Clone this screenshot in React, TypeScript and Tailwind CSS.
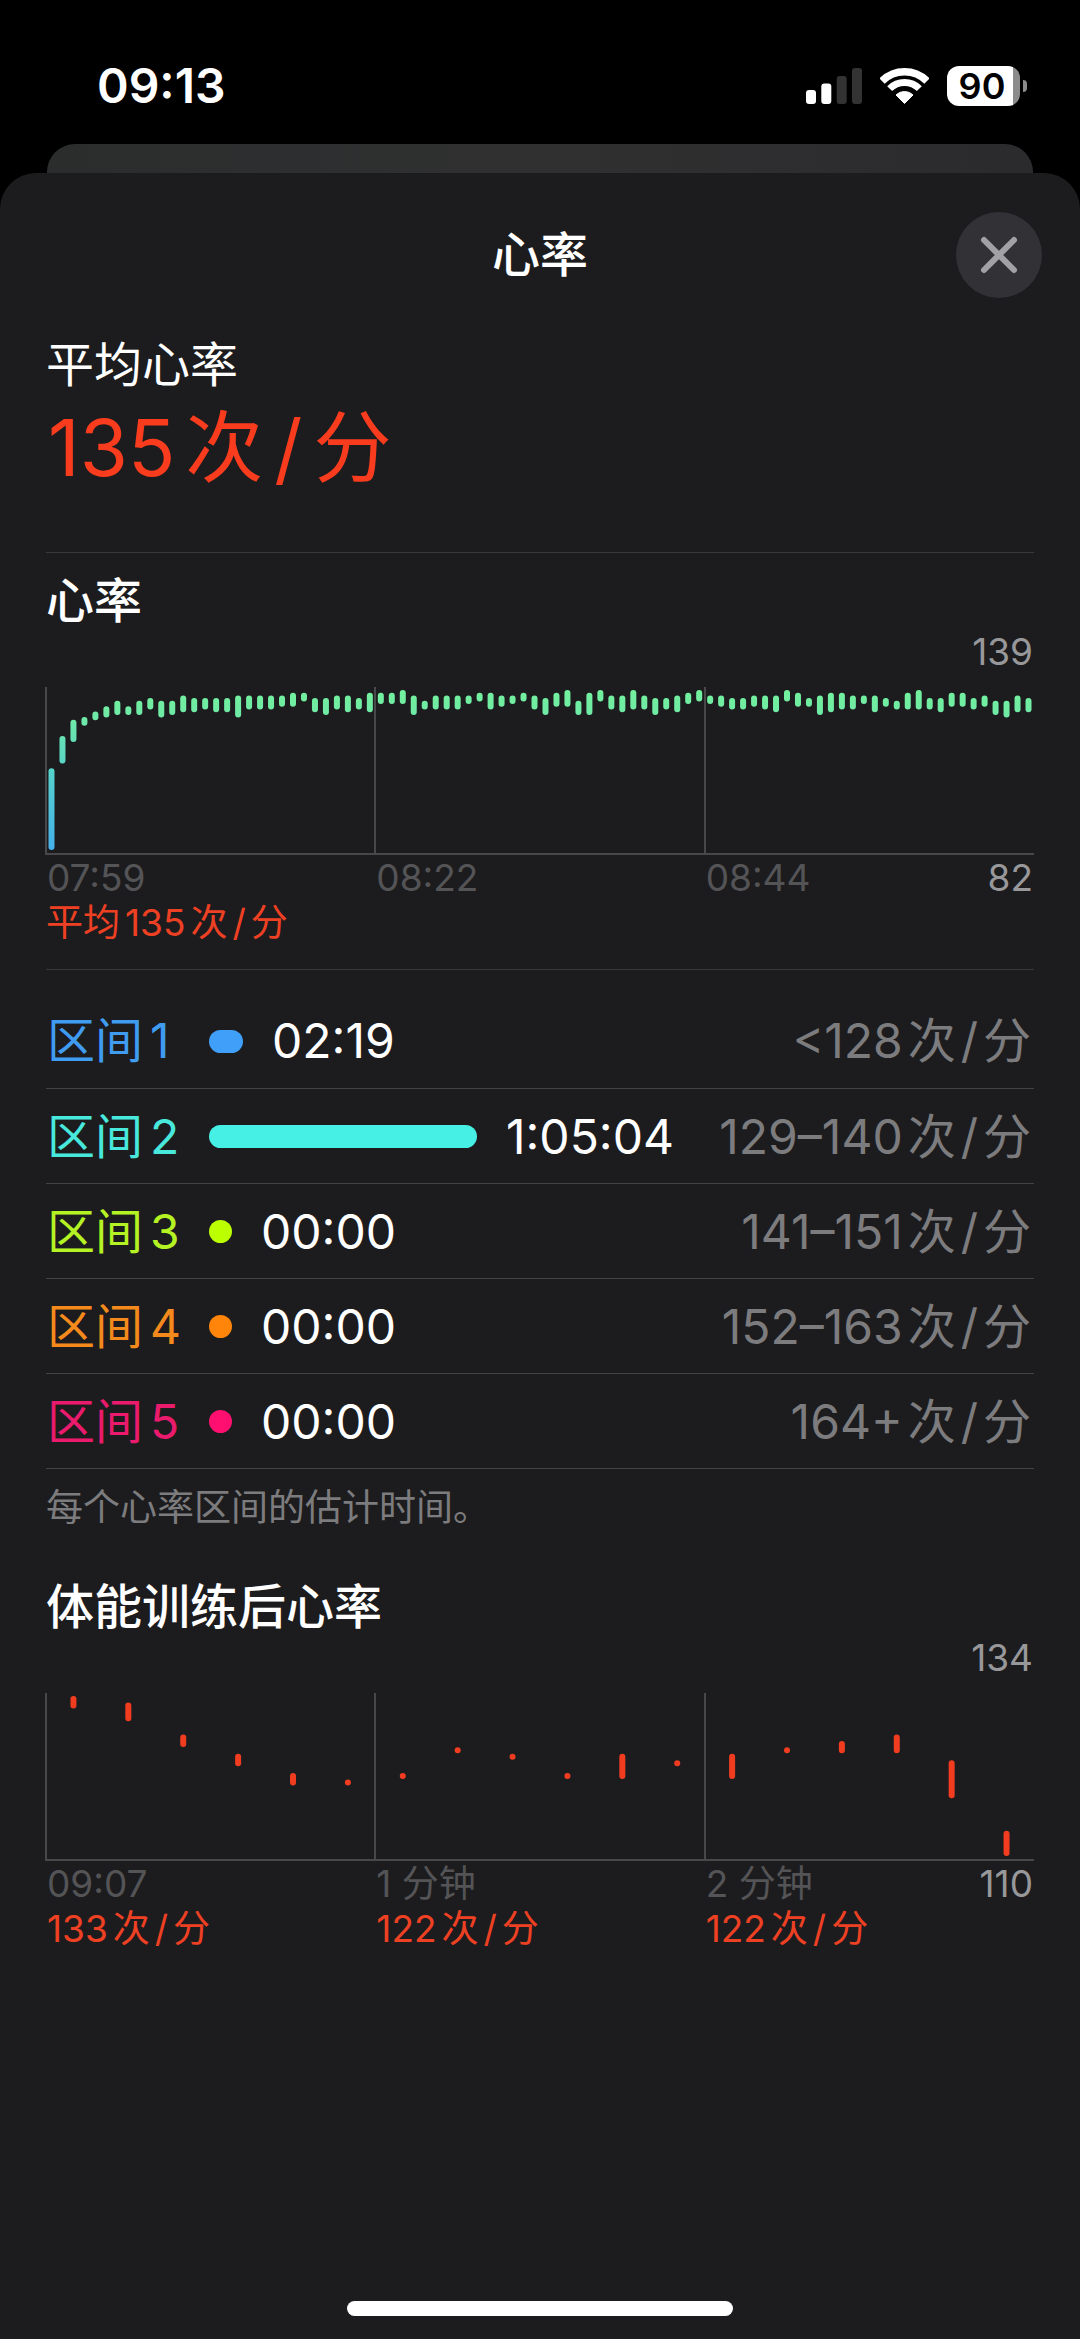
type Range = [number, number];

// [min, max] beats per minute for every sample
const workoutSamples: Range[] = [
  [82, 110], [114, 122], [122, 128], [128, 129], [130, 131], [131, 133], [132, 135], [132, 133], [132, 135], [134, 136],
  [131, 135], [132, 135], [133, 137], [133, 136], [134, 136], [133, 136], [133, 136], [131, 137], [134, 137], [134, 137],
  [134, 137], [135, 137], [135, 138], [137, 138], [133, 136], [132, 136], [134, 137], [133, 137], [134, 136], [133, 138],
  [136, 138], [136, 138], [136, 139], [132, 137], [134, 135], [134, 137], [134, 137], [134, 137], [136, 137], [137, 138],
  [134, 138], [135, 137], [136, 137], [137, 138], [134, 137], [132, 136], [135, 138], [135, 139], [132, 135], [132, 138],
  [137, 139], [134, 137], [133, 137], [134, 139], [134, 137], [132, 136], [134, 136], [133, 137], [136, 138], [137, 139],
  [136, 137], [135, 137], [134, 136], [134, 136], [135, 137], [134, 137], [133, 137], [137, 139], [135, 138], [135, 136],
  [132, 137], [133, 138], [134, 138], [134, 137], [136, 137], [133, 137], [135, 136], [134, 135], [134, 138], [134, 139],
  [134, 136], [133, 136], [135, 138], [135, 138], [134, 136], [135, 137], [132, 135], [131, 135], [133, 137], [133, 136],
];

const recoverySamples: Range[] = [
  [133, 134], [131, 133], [127, 128], [124, 125], [121, 122], [121, 121],
  [122, 122], [126, 126], [125, 125], [122, 122], [122, 125], [124, 124],
  [122, 125], [126, 126], [126, 127], [126, 128], [119, 124], [110, 113],
];

const zones = [
  { id: 1, text: "text-[#409cf0]", bar: "bg-[#409ff8]", width: 34, time: "02:19", range: "<128" },
  { id: 2, text: "text-[#48e8dc]", bar: "bg-[#46f0e4]", width: 268, time: "1:05:04", range: "129–140" },
  { id: 3, text: "text-[#b4f224]", bar: "bg-[#bbff00]", width: 23, time: "00:00", range: "141–151" },
  { id: 4, text: "text-[#f58a1c]", bar: "bg-[#ff850a]", width: 23, time: "00:00", range: "152–163" },
  { id: 5, text: "text-[#ea1a6c]", bar: "bg-[#ff0f70]", width: 23, time: "00:00", range: "164+" },
];

const CHART_WIDTH = 988;
const CHART_HEIGHT = 168;
const BAR_WIDTH = 6;

function Bpm({ value, large = false }: { value: string; large?: boolean }) {
  return (
    <span className="whitespace-nowrap">
      {value}
      <span className={large ? "ml-[10px]" : "ml-[5px]"}>次</span>
      <span className={large ? "mx-[11px]" : "mx-[5px]"}>/</span>
      <span>分</span>
    </span>
  );
}

function StatusBar() {
  return (
    <div className="flex h-[144px] items-center justify-between pt-[28px] pr-[53px] pl-[97px]">
      <span className="text-[48px] leading-[56px] font-semibold">09:13</span>
      <div className="flex items-center gap-[18px]">
        <svg className="h-[36px] w-[56px]" viewBox="0 0 56 36" aria-hidden="true">
          <rect x="0" y="22" width="10" height="14" rx="3" fill="#fff" />
          <rect x="15.3" y="15.5" width="10" height="20.5" rx="3" fill="#fff" />
          <rect x="30.7" y="8" width="10" height="28" rx="3" fill="#333" />
          <rect x="46" y="0" width="10" height="36" rx="3" fill="#333" />
        </svg>
        <svg className="h-[36px] w-[49px]" viewBox="0 0 49 36" fill="none" aria-hidden="true">
          <path d="M2.05 13.05A31.75 31.75 0 0 1 46.95 13.05" stroke="#fff" strokeWidth="7.5" />
          <path d="M9.65 20.65A21 21 0 0 1 39.35 20.65" stroke="#fff" strokeWidth="7" />
          <path d="M24.5 35.5L16 27A12 12 0 0 1 33 27Z" fill="#fff" stroke="#fff" strokeWidth="1" strokeLinejoin="round" />
        </svg>
        <div className="flex items-center gap-[3px]">
          <div className="flex h-[40px] w-[73px] items-center justify-center rounded-[12px] bg-linear-to-r from-white from-90% to-[#8c8c8c] to-90% pr-[3px] text-[36px] leading-[40px] font-semibold text-black">
            90
          </div>
          <div className="h-[12px] w-[4px] rounded-r-full bg-[#8c8c8c]" />
        </div>
      </div>
    </div>
  );
}

interface ChartProps {
  id: string;
  label: string;
  samples: Range[];
  min: number;
  max: number;
  stops: [number, string][];
}

function RangeChart({ id, label, samples, min, max, stops }: ChartProps) {
  const step = CHART_WIDTH / samples.length;
  const unit = (CHART_HEIGHT - 8 - BAR_WIDTH) / (max - min);

  return (
    <svg
      className="mt-[13px] block w-full overflow-visible"
      viewBox={`0 0 ${CHART_WIDTH} ${CHART_HEIGHT}`}
      role="img"
      aria-label={label}
    >
      <defs>
        <linearGradient id={id} gradientUnits="userSpaceOnUse" x1="0" y1="0" x2="0" y2={CHART_HEIGHT}>
          {stops.map(([offset, color]) => (
            <stop key={offset} offset={offset} stopColor={color} />
          ))}
        </linearGradient>
      </defs>
      <g fill="#48484a">
        <rect x="-1" y="0" width="2" height={CHART_HEIGHT} />
        <rect x="328" y="0" width="2" height={CHART_HEIGHT} />
        <rect x="658" y="0" width="2" height={CHART_HEIGHT} />
        <rect x="-1" y={CHART_HEIGHT - 2} width={CHART_WIDTH + 1} height="2" />
      </g>
      <g fill={`url(#${id})`}>
        {samples.map(([low, high], i) => (
          <rect
            key={i}
            x={(i + 0.5) * step - BAR_WIDTH / 2}
            y={3 + (max - high) * unit}
            width={BAR_WIDTH}
            height={(high - low) * unit + BAR_WIDTH}
            rx={BAR_WIDTH / 2}
          />
        ))}
      </g>
    </svg>
  );
}

function AxisLabels({ labels, min }: { labels: string[]; min: number }) {
  return (
    <div className="grid grid-cols-3 text-[#545457]">
      {labels.map((label, i) => (
        <div key={label} className="flex justify-between px-px">
          <span>{label}</span>
          {i === labels.length - 1 && <span className="text-[#98989b]">{min}</span>}
        </div>
      ))}
    </div>
  );
}

export default function App() {
  return (
    <div className="flex min-h-screen flex-col bg-black font-['Inter','Noto_Sans_CJK_SC',sans-serif] text-white" lang="zh-CN">
      <StatusBar />
      <div className="mx-[47px] h-[29px] rounded-t-[28px] bg-linear-to-r from-[#2b2d2d] via-[#303031] to-[#2b2b2d]" />

      <main className="flex flex-1 flex-col rounded-t-[36px] bg-[#1c1c1e] pt-[39px]">
        <header className="grid grid-cols-[1fr_auto_1fr] items-center px-[38px]">
          <h1 className="col-start-2 text-[48px] leading-[56px] font-medium">心率</h1>
          <button
            type="button"
            aria-label="关闭"
            className="flex size-[86px] items-center justify-center justify-self-end rounded-full bg-[#323236]"
          >
            <svg className="size-[38px]" viewBox="0 0 38 38" fill="none" stroke="#a1a1a6" strokeWidth="6" strokeLinecap="round">
              <path d="M4 4L34 34M34 4L4 34" />
            </svg>
          </button>
        </header>

        <div className="px-[46px] text-[37px] leading-[45px]">
          <section className="mt-[39px] border-b border-[#38383a] pb-[58px]">
            <h2 className="text-[48px] leading-[56px]">平均心率</h2>
            <p className="mt-[9px] pl-[2px] text-[78px] leading-[92px] text-[#fa3c1e]">
              <Bpm value="135" large />
            </p>
          </section>

          {/* Heart rate during the workout */}
          <section className="border-b border-[#38383a] pt-[20px] pb-[24px]">
            <h2 className="text-[48px] leading-[56px] font-medium">心率</h2>
            <p className="pr-px text-right text-[#98989b]">139</p>
            <RangeChart
              id="workout"
              label="体能训练心率"
              samples={workoutSamples}
              min={82}
              max={139}
              stops={[
                [0, "#74f29c"],
                [0.2, "#6ee8a8"],
                [0.5, "#55d2cc"],
                [1, "#44aeec"],
              ]}
            />
            <AxisLabels labels={["07:59", "08:22", "08:44"]} min={82} />
            <p className="text-[#ee4023]">
              平均<span className="ml-[5px]"><Bpm value="135" /></span>
            </p>
          </section>

          {/* Zones */}
          <table className="mt-[23px] w-full border-collapse text-[48px] leading-[56px]">
            <tbody>
              {zones.map((zone) => (
                <tr key={zone.id} className="h-[95px] border-b border-[#434345]">
                  <th scope="row" className={`w-[163px] pt-[2px] pl-px text-left font-normal whitespace-nowrap ${zone.text}`}>
                    区间<span className="ml-[7px]">{zone.id}</span>
                  </th>
                  <td className="pt-[2px]">
                    <div className="flex items-center gap-[29px]">
                      <div className={`h-[23px] rounded-full ${zone.bar}`} style={{ width: zone.width }} />
                      <span>{zone.time}</span>
                    </div>
                  </td>
                  <td className="pt-[2px] pr-[3px] text-right text-[#7c7c7f]">
                    <Bpm value={zone.range} />
                  </td>
                </tr>
              ))}
            </tbody>
          </table>
          <p className="mt-[16px] text-[#7c7c7f]">每个心率区间的估计时间。</p>

          {/* Recovery after the workout */}
          <section className="mt-[49px]">
            <h2 className="text-[48px] leading-[56px] font-medium">体能训练后心率</h2>
            <p className="pr-px text-right text-[#98989b]">134</p>
            <RangeChart
              id="recovery"
              label="体能训练后心率"
              samples={recoverySamples}
              min={110}
              max={134}
              stops={[
                [0, "#f23c20"],
                [1, "#f23c20"],
              ]}
            />
            <AxisLabels labels={["09:07", "1 分钟", "2 分钟"]} min={110} />
            <div className="grid grid-cols-3 text-[#ee4023]">
              {["133", "122", "122"].map((value, i) => (
                <p key={i} className="pl-px">
                  <Bpm value={value} />
                </p>
              ))}
            </div>
          </section>
        </div>

        <div className="mx-auto mt-auto mb-[23px] h-[15px] w-[386px] rounded-full bg-white" />
      </main>
    </div>
  );
}
